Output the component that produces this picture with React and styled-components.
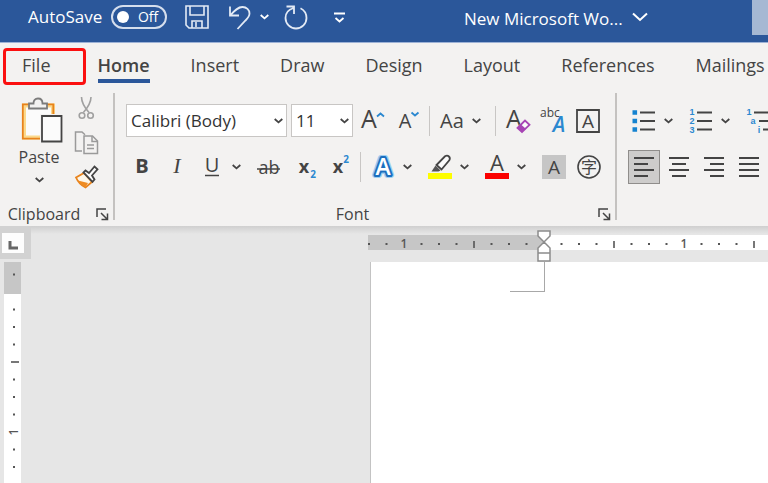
import React, { useEffect, useState } from "react";
import styled, { createGlobalStyle, ThemeProvider } from "styled-components";

const theme = {
  colors: {
    brand: "#2b579a",
    ribbon: "#f3f2f1",
    text: "#444444",
    line: "#c8c6c4",
    canvas: "#e6e6e6",
  },
};

const GlobalStyle = createGlobalStyle`
  *,
  *:after {
    box-sizing: border-box;
  }
  body {
    margin: 0;
    font-family: "Open Sans", "Noto Sans", sans-serif;
    color: #444444;
  }
  button {
    font: inherit;
    color: inherit;
    border: 0;
    padding: 0;
    background: none;
  }
  svg {
    display: block;
    flex: none;
    overflow: visible;
  }
`;

const Page = styled.div`
  min-height: 100vh;
  display: flex;
  flex-direction: column;
  overflow: hidden;
`;

/* title bar */

const TitleBar = styled.header`
  height: 43px;
  display: flex;
  align-items: flex-start;
  padding-left: 28px;
  overflow: hidden;
  color: #ffffff;
  background: ${(props) => props.theme.colors.brand};
  border-bottom: 1px solid #9db2d6;
`;

const QuickAccess = styled.div`
  flex: none;
  width: 436px;
  height: 34px;
  display: flex;
  align-items: center;
`;

const AutoSave = styled.label`
  display: flex;
  align-items: center;
  gap: 9px;
  margin-right: 17px;
  font-size: 17px;
  line-height: 24px;
`;

const Switch = styled.span`
  position: relative;
  width: 56px;
  height: 24px;
  padding-right: 7px;
  border: 2px solid #d5deed;
  border-radius: 12px;
  font-size: 14px;
  line-height: 20px;
  text-align: right;
  input {
    position: absolute;
    top: 4px;
    left: 4px;
    width: 12px;
    height: 12px;
    margin: 0;
    appearance: none;
    border-radius: 50%;
    background: #ffffff;
  }
`;

const QuickButton = styled.button`
  width: ${(props) => (props.$caret ? "22px" : "26px")};
  height: 28px;
  margin-right: ${(props) => props.$after || 0}px;
  display: flex;
  align-items: center;
  justify-content: center;
`;

const DocTitle = styled.button`
  height: 36px;
  display: flex;
  align-items: center;
  gap: 9px;
  font-size: 17px;
  white-space: nowrap;
`;

const SearchBox = styled.input`
  flex: none;
  width: 16px;
  height: 35px;
  margin-left: auto;
  padding: 0;
  border: 0;
  border-radius: 0;
  background: #a5b8d3;
`;

/* tabs */

const Tabs = styled.nav`
  height: 48px;
  display: flex;
  align-items: flex-start;
  gap: 41px;
  padding-left: 22px;
  overflow: hidden;
  background: ${(props) => props.theme.colors.ribbon};
`;

const Tab = styled.a`
  position: relative;
  flex: none;
  padding-top: 9px;
  font-size: 18px;
  line-height: 27px;
  font-weight: ${(props) => (props.$active ? 600 : 400)};
  color: ${(props) => props.theme.colors.text};
  text-decoration: none;
  border-bottom: 4px solid
    ${(props) => (props.$active ? props.theme.colors.brand : "transparent")};
`;

const FileTab = styled(Tab)`
  margin-right: 6px;
  &:after {
    position: absolute;
    content: "";
    top: 5px;
    left: -19px;
    width: 83px;
    height: 37px;
    border: 3px solid #fb1010;
    border-radius: 4px;
  }
`;

/* ribbon */

const Ribbon = styled.div`
  height: 135px;
  display: flex;
  overflow: hidden;
  background: ${(props) => props.theme.colors.ribbon};
`;

const Group = styled.section`
  flex: none;
  width: ${(props) => props.$width};
  display: flex;
  flex-direction: column;
`;

const Separator = styled.div`
  flex: none;
  width: 2px;
  margin: 2px 0 6px;
  background: #c4c2c0;
`;

const GroupFooter = styled.div`
  margin-top: auto;
  padding: 0 4px 2px 0;
  display: flex;
  align-items: center;
  gap: 8px;
  font-size: 16px;
  line-height: 20px;
  span {
    flex: 1;
    text-align: center;
  }
`;

const Rows = styled.div`
  display: flex;
  flex-direction: column;
  gap: 13px;
  padding: 13px 0 0 11px;
`;

const Row = styled.div`
  display: flex;
  align-items: center;
  height: 33px;
`;

const ToolButton = styled.button`
  flex: none;
  width: 32px;
  height: 34px;
  margin-right: ${(props) => (props.$split ? 0 : 3)}px;
  display: flex;
  align-items: center;
  justify-content: center;
  background: ${(props) => (props.$pressed ? "#cdcccb" : "transparent")};
  border: 1px solid ${(props) => (props.$pressed ? "#8f8d8b" : "transparent")};
`;

const CaretButton = styled.button`
  flex: none;
  width: 22px;
  height: 34px;
  margin-right: 3px;
  padding-left: 4px;
  display: flex;
  align-items: center;
`;

const Divider = styled.div`
  flex: none;
  width: 1px;
  height: 30px;
  margin: 0 6px 0 2px;
  background: ${(props) => props.theme.colors.line};
`;

const Combo = styled.div`
  display: grid;
  align-items: center;
  width: ${(props) => props.$width};
  margin-right: 4px;
  select,
  svg {
    grid-area: 1 / 1;
  }
  select {
    width: 100%;
    height: 33px;
    padding: 0 0 1px 4px;
    appearance: none;
    border: 1px solid ${(props) => props.theme.colors.line};
    border-radius: 0;
    background: #ffffff;
    color: #333333;
    font-family: inherit;
    font-size: 17px;
  }
  svg {
    justify-self: end;
    margin-right: 4px;
    pointer-events: none;
  }
`;

const ClipboardBody = styled.div`
  display: flex;
  gap: 2px;
  padding-left: 10px;
`;

const PasteButton = styled.button`
  width: 58px;
  padding-top: 6px;
  display: flex;
  flex-direction: column;
  align-items: center;
  font-size: 16px;
  line-height: 24px;
  svg + span {
    margin: 2px 0 8px;
  }
`;

const SmallTools = styled.div`
  display: flex;
  flex-direction: column;
`;

/* editor */

const Editor = styled.main`
  flex: 1;
  display: flex;
  background: linear-gradient(#cfcfcf, #e6e6e6 8px);
  background-color: ${(props) => props.theme.colors.canvas};
  overflow: hidden;
`;

const Side = styled.div`
  flex: none;
  width: 31px;
  display: flex;
  flex-direction: column;
`;

const TabSelector = styled.button`
  height: 33px;
  padding: 7px 6px 6px 2px;
  background: #d2d2d2;
  svg {
    background: #fdfdfd;
  }
`;

const VerticalRuler = styled.div`
  flex: 1 1 0px;
  min-height: 0;
  width: 17px;
  margin: 3px 0 0 4px;
  overflow: hidden;
  background: #ffffff;
`;

const Sheet = styled.div`
  flex: 1;
  min-width: 0;
  margin-left: 337px;
  padding-top: 9px;
  display: flex;
  flex-direction: column;
`;

const HorizontalRuler = styled.div`
  position: relative;
  height: 15px;
  background: #ffffff;
`;

const RulerTrack = styled.div`
  height: 15px;
  overflow-x: clip;
`;

const IndentMarker = styled.svg`
  position: absolute;
  top: -5px;
  left: 169px;
`;

const Paper = styled.article`
  flex: 1;
  margin: 12px 0 0 2px;
  background: #ffffff;
  border-left: 1px solid #c3c3c3;
`;

const MarginCorner = styled.div`
  width: 35px;
  height: 30px;
  margin-left: 139px;
  border-right: 1px solid #a8a8a8;
  border-bottom: 1px solid #a8a8a8;
`;

/* icons */

const Icon = ({ w = 24, h = 24, children }) => (
  <svg
    width={w}
    height={h}
    viewBox={`0 0 ${w} ${h}`}
    fill="none"
    stroke="#444444"
    strokeWidth="1.5"
    aria-hidden="true"
  >
    {children}
  </svg>
);

const Glyph = ({ fill = "#444444", children, ...rest }) => (
  <text fill={fill} stroke="none" textAnchor="middle" {...rest}>
    {children}
  </text>
);

const Chevron = ({ color = "#444444" }) => (
  <Icon w={9} h={6}>
    <path d="M.7 1 L4.5 4.400 L8.300 1" stroke={color} strokeWidth="1.800" />
  </Icon>
);

const SaveIcon = () => (
  <Icon>
    <g stroke="#e3eaf5" strokeWidth="1.6">
      <path d="M1 1h22v22H4l-3-3z" />
      <path d="M5 1v9h14V1M7 23v-7h10v7M11 17v5" />
    </g>
  </Icon>
);

const UndoIcon = () => (
  <Icon>
    <path
      d="M2 1.500v9h9M2.500 10C7 5 10 2 14.500 2c4 0 7 2.800 7 6.500 0 3-1.500 4.500-4 7L9.500 24"
      stroke="#e3eaf5"
      strokeWidth="1.800"
    />
  </Icon>
);

const RedoIcon = () => (
  <Icon>
    <path
      d="M2.500 1.500H10V9M9.500 3C4.500 4.500 1.500 8.500 1.500 13a10.500 10.500 0 0 0 21 0c0-4.500-2.500-8-6-9.800"
      stroke="#e3eaf5"
      strokeWidth="1.800"
    />
  </Icon>
);

const CustomizeIcon = () => (
  <Icon w={11} h={11}>
    <path d="M0 1.500h11M1.500 6L5.500 9.500 9.500 6" stroke="#ffffff" strokeWidth="1.8" />
  </Icon>
);

const PasteIcon = () => (
  <Icon w={50} h={46}>
    <g transform="translate(7 0)">
      <path d="M3 8.500h29v32H3z" fill="#fbfbfb" stroke="#fbd98c" strokeWidth="4" />
      <path d="M1.800 7.300h30.500v34.300H1.800z" stroke="#e8831c" strokeWidth="1.8" />
      <path
        d="M8 11.500V6.500h4.500C12.500 3.500 14 1.500 17 1.500s4.500 2 4.500 5H26v5z"
        fill="#f3f2f1"
        stroke="#7c7c7c"
        strokeWidth="1.8"
      />
      <path d="M19 17h23v29H19z" fill="#f3f2f1" stroke="none" />
      <path d="M21 19h19.500v25.500H21z" fill="#fbfbfb" strokeWidth="1.8" />
    </g>
  </Icon>
);

const CutIcon = () => (
  <Icon>
    <g stroke="#a0a0a0" strokeWidth="1.6">
      <path d="M7.500 1c0 5 2.200 9.500 7.500 15.500M17 1c0 5-2.300 9.500-7.600 15.500" />
      <circle cx="8" cy="19.500" r="2.800" />
      <circle cx="16.500" cy="19.500" r="2.800" />
    </g>
  </Icon>
);

const CopyIcon = () => (
  <Icon w={25} h={25}>
    <g stroke="#9a9a9a" strokeWidth="1.500">
      <path d="M8 21H1.500V2H8l3 2.800" />
      <path d="M10 6h8.500l5 5v12.500H10z" />
      <path d="M18 6v5.500h5.500M13 15h7M13 18.500h7" />
    </g>
  </Icon>
);

const PainterIcon = () => (
  <Icon w={25} h={25}>
    <path d="M2 13.500l8-4.500 8 9-6.500 5.500C7 21.500 4 18 2 13.500z" fill="#fdf6e8" stroke="#e8831c" strokeWidth="1.800" />
    <path d="M4 16.500l10 2.500-2.500 4C8.500 22 6 20 4 16.500z" fill="#ee8b22" stroke="none" />
    <path d="M9.500 8.500l2-2 3.500 2.500 5.500-6.500 3 2.800-5.500 6.200 2.500 4-2 2.300z" fill="#fbfbfb" strokeWidth="1.8" />
  </Icon>
);

const LauncherIcon = () => (
  <Icon w={13} h={13}>
    <path d="M1 9V1h9M5 5l6 6M11.500 5.500v6h-6" strokeWidth="1.500" />
  </Icon>
);

const GrowFontIcon = () => (
  <Icon>
    <Glyph x="8" y="19" fontSize="25">A</Glyph>
    <path d="M16 7.500L19.500 4.500l3.500 3" stroke="#2b88d0" strokeWidth="1.800" />
  </Icon>
);

const ShrinkFontIcon = () => (
  <Icon>
    <Glyph x="9" y="19" fontSize="20">A</Glyph>
    <path d="M15.500 3.500l3.500 3 3.500-3" stroke="#2b88d0" strokeWidth="1.800" />
  </Icon>
);

const ChangeCaseIcon = () => (
  <Icon w={28}>
    <Glyph x="14" y="19" fontSize="20">Aa</Glyph>
  </Icon>
);

const ClearFormatIcon = () => (
  <Icon>
    <Glyph x="8" y="19" fontSize="25">A</Glyph>
    <path d="M10 19.500L19.500 9.500l6 5.300-9.500 9.500z" fill="#f3f2f1" stroke="none" />
    <path d="M11.500 19l7.500-7.500 4.500 4.300-7.500 7.200z" fill="#fbfbfb" stroke="#a745b5" strokeWidth="1.800" />
    <path d="M11.500 19l3.500-3.500 4.500 4-3.500 3.500z" fill="#a745b5" stroke="none" />
  </Icon>
);

const PhoneticIcon = () => (
  <Icon w={26}>
    <Glyph x="10" y="8" fontSize="12">abc</Glyph>
    <Glyph x="19" y="23" fontSize="21" fontStyle="italic" fontWeight="600" fill="#2b88d0">A</Glyph>
  </Icon>
);

const BorderedIcon = () => (
  <Icon>
    <path d="M1 1h22v22H1z" strokeWidth="1.800" />
    <Glyph x="12" y="19" fontSize="19">A</Glyph>
  </Icon>
);

const BoldIcon = () => (
  <Icon>
    <Glyph x="12" y="18" fontSize="20" fontWeight="700">B</Glyph>
  </Icon>
);

const ItalicIcon = () => (
  <Icon>
    <Glyph x="12" y="18" fontSize="22" fontStyle="italic" fontFamily="Liberation Serif, serif">I</Glyph>
  </Icon>
);

const UnderlineIcon = () => (
  <Icon>
    <Glyph x="12" y="17" fontSize="20">U</Glyph>
    <path d="M5 20.500h14" />
  </Icon>
);

const StrikeIcon = () => (
  <Icon w={26}>
    <Glyph x="13" y="19" fontSize="18">ab</Glyph>
    <path d="M1 14h23" />
  </Icon>
);

const SubscriptIcon = () => (
  <Icon w={26}>
    <Glyph x="13" y="18" fontSize="18" fontWeight="700">x</Glyph>
    <Glyph x="22" y="23" fontSize="10" fontWeight="700" fill="#2b88d0">2</Glyph>
  </Icon>
);

const SuperscriptIcon = () => (
  <Icon w={26}>
    <Glyph x="12" y="18" fontSize="18" fontWeight="700">x</Glyph>
    <Glyph x="20" y="8" fontSize="10" fontWeight="700" fill="#2b88d0">2</Glyph>
  </Icon>
);

const TextEffectsIcon = () => (
  <Icon w={26} h={26}>
    <Glyph
      x="13"
      y="21"
      fontSize="23"
      fontWeight="700"
      fill="#ffffff"
      style={{ stroke: "#9fcdf0", strokeWidth: 6, strokeLinejoin: "round", paintOrder: "stroke" }}
    >
      A
    </Glyph>
    <Glyph
      x="13"
      y="21"
      fontSize="23"
      fontWeight="600"
      fill="#ffffff"
      style={{ stroke: "#1b6fbf", strokeWidth: 4, strokeLinejoin: "round", paintOrder: "stroke" }}
      aria-hidden="true"
    >
      A
    </Glyph>
  </Icon>
);

const HighlightIcon = () => (
  <Icon>
    <path d="M3.500 16.500l4-6 5 5-2 1z" fill="#555555" stroke="none" />
    <path d="M8.500 10L17 1.300c3-1.800 6 1 4.300 4L13.500 14.500z" fill="#fbfbfb" strokeWidth="1.800" />
    <path d="M0 18h24v6H0z" fill="#fdfd00" stroke="none" />
  </Icon>
);

const FontColorIcon = () => (
  <Icon>
    <Glyph x="12" y="16" fontSize="22">A</Glyph>
    <path d="M0 18h24v6H0z" fill="#fb0000" stroke="none" />
  </Icon>
);

const ShadingIcon = () => (
  <Icon>
    <path d="M0 0h24v24H0z" fill="#c6c6c6" stroke="none" />
    <Glyph x="12" y="19" fontSize="19">A</Glyph>
  </Icon>
);

const EncloseIcon = () => (
  <Icon>
    <circle cx="12" cy="12" r="11" strokeWidth="1.600" />
    <Glyph x="12" y="18" fontSize="16" fontFamily="Noto Sans CJK SC, sans-serif">字</Glyph>
  </Icon>
);

const ListGlyph = (props) => (
  <Glyph fontSize="9" fontWeight="700" fontFamily="Liberation Sans, sans-serif" fill="#2b88d0" {...props} />
);

const BulletsIcon = () => (
  <Icon>
    <path d="M8 3.500h15M8 12h15M8 20.500h15" strokeWidth="1.800" />
    <path d="M.5 1.200h4.600v4.600H.5zM.5 9.700h4.600v4.600H.5zM.5 18.200h4.600v4.600H.5z" fill="#1583d0" stroke="none" />
  </Icon>
);

const NumberingIcon = () => (
  <Icon>
    <path d="M8 3.500h15M8 12h15M8 20.500h15" strokeWidth="1.800" />
    <ListGlyph x="3" y="6">1</ListGlyph>
    <ListGlyph x="3" y="15">2</ListGlyph>
    <ListGlyph x="3" y="24">3</ListGlyph>
  </Icon>
);

const MultilevelIcon = () => (
  <Icon>
    <path d="M8 3.500h15M13 12h11M17 20.500h7" strokeWidth="1.800" />
    <ListGlyph x="3" y="6">1</ListGlyph>
    <ListGlyph x="7" y="15">a</ListGlyph>
    <ListGlyph x="13" y="24">i</ListGlyph>
  </Icon>
);

const alignPaths = {
  Left: "M2 3h20M2 9h14M2 15h20M2 21h14",
  Center: "M2 3h20M5 9h14M2 15h20M5 21h14",
  Right: "M2 3h20M8 9h14M2 15h20M8 21h14",
  Justify: "M2 3h20M2 9h20M2 15h20M2 21h20",
};

const AlignIcon = ({ kind }) => (
  <Icon>
    <path d={alignPaths[kind]} strokeWidth="1.800" />
  </Icon>
);

/* one step is an eighth of an inch, numbers stand on every eighth step */
const STEP = 17.5;

const Ticks = ({ from, to, origin, vertical }) => {
  const marks = [];
  for (let i = from; i <= to; i++) {
    if (i === 0) continue;
    const at = origin + i * STEP;
    const x = vertical ? 10 : at;
    const y = vertical ? at : 9;
    if (i % 8 === 0) {
      marks.push(
        <Glyph
          key={i}
          x={vertical ? 14 : x}
          y={vertical ? y : 13}
          fontSize="12"
          fontWeight="600"
          fill="#555555"
          transform={vertical ? `rotate(-90 14 ${y})` : undefined}
        >
          {Math.abs(i / 8)}
        </Glyph>
      );
    } else if (i % 4 === 0) {
      marks.push(
        <path key={i} d={vertical ? `M${x - 3} ${y}h8` : `M${x} ${y - 3}v7`} stroke="#555555" strokeWidth="1.600" />
      );
    } else {
      marks.push(<rect key={i} x={x - 1} y={y - 1} width="2" height="2" fill="#555555" stroke="none" />);
    }
  }
  return marks;
};

const useWindowSize = () => {
  const read = () => ({ width: window.innerWidth, height: window.innerHeight });
  const [size, setSize] = useState(read);
  useEffect(() => {
    const onResize = () => setSize(read());
    window.addEventListener("resize", onResize);
    return () => window.removeEventListener("resize", onResize);
  }, []);
  return size;
};

const Rulers = { left: 368, top: 262, marginX: 176, marginY: 30 };

const tabs = ["Insert", "Draw", "Design", "Layout", "References", "Mailings"];

const Tool = ({ label, children, ...rest }) => (
  <ToolButton type="button" aria-label={label} {...rest}>
    {children}
  </ToolButton>
);

const SplitTool = ({ label, children }) => (
  <>
    <Tool label={label} $split>
      {children}
    </Tool>
    <CaretButton type="button" aria-label={`${label} options`}>
      <Chevron />
    </CaretButton>
  </>
);

const Footer = ({ name }) => (
  <GroupFooter>
    <span>{name}</span>
    <button type="button" aria-label={`${name} settings`}>
      <LauncherIcon />
    </button>
  </GroupFooter>
);

function App() {
  const { width, height } = useWindowSize();
  const trackWidth = Math.max(width - Rulers.left, Rulers.marginX);
  const trackHeight = Math.max(height - Rulers.top, Rulers.marginY);

  return (
    <ThemeProvider theme={theme}>
      <GlobalStyle />
      <Page>
        <TitleBar>
          <QuickAccess>
            <AutoSave htmlFor="autosave">
              AutoSave
              <Switch>
                <input id="autosave" type="checkbox" role="switch" />
                Off
              </Switch>
            </AutoSave>
            <QuickButton type="button" aria-label="Save" $after={17}>
              <SaveIcon />
            </QuickButton>
            <QuickButton type="button" aria-label="Undo">
              <UndoIcon />
            </QuickButton>
            <QuickButton type="button" aria-label="Undo history" $caret $after={8}>
              <Chevron color="#ffffff" />
            </QuickButton>
            <QuickButton type="button" aria-label="Redo" $after={17}>
              <RedoIcon />
            </QuickButton>
            <QuickButton type="button" aria-label="Customize toolbar">
              <CustomizeIcon />
            </QuickButton>
          </QuickAccess>
          <DocTitle type="button">
            New Microsoft Wo...
            <Icon w={16} h={10}>
              <path d="M1 .5l7 6.500 7-6.500" stroke="#ffffff" strokeWidth="2" />
            </Icon>
          </DocTitle>
          <SearchBox type="search" aria-label="Search" />
        </TitleBar>

        <Tabs>
          <FileTab href="#file">File</FileTab>
          <Tab href="#home" $active>
            Home
          </Tab>
          {tabs.map((name) => (
            <Tab key={name} href={`#${name.toLowerCase()}`}>
              {name}
            </Tab>
          ))}
        </Tabs>

        <Ribbon>
          <Group $width="113px">
            <ClipboardBody>
              <PasteButton type="button">
                <PasteIcon />
                <span>Paste</span>
                <Chevron />
              </PasteButton>
              <SmallTools>
                <Tool label="Cut"><CutIcon /></Tool>
                <Tool label="Copy"><CopyIcon /></Tool>
                <Tool label="Format painter"><PainterIcon /></Tool>
              </SmallTools>
            </ClipboardBody>
            <Footer name="Clipboard" />
          </Group>
          <Separator />
          <Group $width="500px">
            <Rows>
              <Row>
                <Combo $width="161px">
                  <select aria-label="Font name" defaultValue="Calibri (Body)">
                    <option>Calibri (Body)</option>
                  </select>
                  <Chevron />
                </Combo>
                <Combo $width="62px">
                  <select aria-label="Font size" defaultValue="11">
                    <option>11</option>
                  </select>
                  <Chevron />
                </Combo>
                <Tool label="Grow font"><GrowFontIcon /></Tool>
                <Tool label="Shrink font"><ShrinkFontIcon /></Tool>
                <Divider />
                <SplitTool label="Change case"><ChangeCaseIcon /></SplitTool>
                <Divider />
                <Tool label="Clear formatting"><ClearFormatIcon /></Tool>
                <Tool label="Phonetic guide"><PhoneticIcon /></Tool>
                <Tool label="Character border"><BorderedIcon /></Tool>
              </Row>
              <Row>
                <Tool label="Bold"><BoldIcon /></Tool>
                <Tool label="Italic"><ItalicIcon /></Tool>
                <SplitTool label="Underline"><UnderlineIcon /></SplitTool>
                <Tool label="Strikethrough"><StrikeIcon /></Tool>
                <Tool label="Subscript"><SubscriptIcon /></Tool>
                <Tool label="Superscript"><SuperscriptIcon /></Tool>
                <Divider />
                <SplitTool label="Text effects"><TextEffectsIcon /></SplitTool>
                <SplitTool label="Highlight"><HighlightIcon /></SplitTool>
                <SplitTool label="Font color"><FontColorIcon /></SplitTool>
                <Tool label="Character shading"><ShadingIcon /></Tool>
                <Tool label="Enclose characters"><EncloseIcon /></Tool>
              </Row>
            </Rows>
            <Footer name="Font" />
          </Group>
          <Separator />
          <Group>
            <Rows>
              <Row>
                <SplitTool label="Bullets"><BulletsIcon /></SplitTool>
                <SplitTool label="Numbering"><NumberingIcon /></SplitTool>
                <Tool label="Multilevel list"><MultilevelIcon /></Tool>
              </Row>
              <Row>
                {Object.keys(alignPaths).map((kind) => (
                  <Tool key={kind} label={`Align ${kind}`} $pressed={kind === "Left"}>
                    <AlignIcon kind={kind} />
                  </Tool>
                ))}
              </Row>
            </Rows>
          </Group>
        </Ribbon>

        <Editor>
          <Side>
            <TabSelector type="button" aria-label="Tab stop">
              <Icon w={22} h={20}>
                <path d="M8 8v7h8" stroke="#666666" strokeWidth="3" />
              </Icon>
            </TabSelector>
            <VerticalRuler>
              <Icon w={17} h={trackHeight}>
                <path d="M0 0h17v32H0z" fill="#c6c6c6" stroke="none" />
                <Ticks
                  from={-1}
                  to={Math.floor((trackHeight - Rulers.marginY) / STEP)}
                  origin={Rulers.marginY}
                  vertical
                />
              </Icon>
            </VerticalRuler>
          </Side>
          <Sheet>
            <HorizontalRuler>
              <RulerTrack>
                <Icon w={trackWidth} h={15}>
                  <path d="M0 0h176v15H0z" fill="#c6c6c6" stroke="none" />
                  <Ticks
                    from={-10}
                    to={Math.floor((trackWidth - Rulers.marginX) / STEP)}
                    origin={Rulers.marginX}
                  />
                </Icon>
              </RulerTrack>
              <IndentMarker width="14" height="33" viewBox="0 0 14 33" fill="#ffffff" stroke="#8c8c8c" strokeWidth="1.500">
                <path d="M1 1h12v5L7 12 1 6zM7 12l6 6v5H1v-5zM1 23h12v8H1z" />
              </IndentMarker>
            </HorizontalRuler>
            <Paper>
              <MarginCorner />
            </Paper>
          </Sheet>
        </Editor>
      </Page>
    </ThemeProvider>
  );
}

export default App;
